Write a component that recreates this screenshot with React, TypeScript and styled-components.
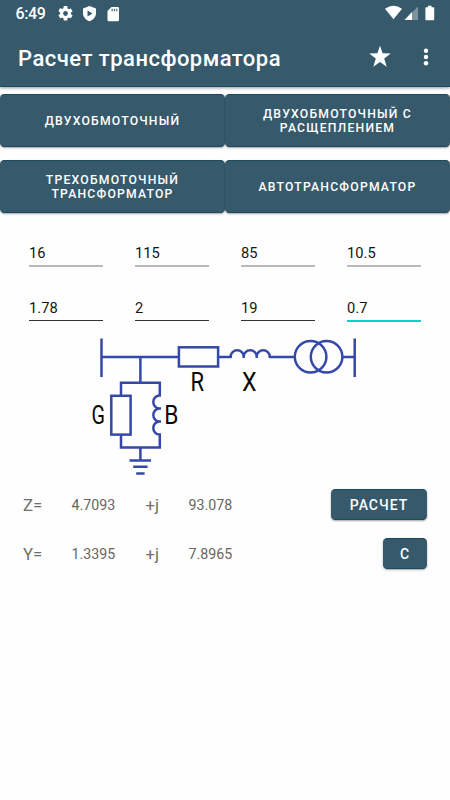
import React from "react";
import styled, { createGlobalStyle } from "styled-components";

const PRIMARY = "#365a6c";

const GlobalStyle = createGlobalStyle`
  * { box-sizing: border-box; }
  body { margin: 0; background: #fff; font-family: Roboto, sans-serif; }
`;

const Screen = styled.div`
  width: 450px;
  height: 800px;
  overflow: hidden;
  background: #fefefe;
  display: flex;
  flex-direction: column;
`;

const Header = styled.header`
  height: 87px;
  flex: none;
  background: ${PRIMARY};
  color: #fff;
  border-bottom: 1px solid #1c4a61;
  box-shadow: 0 1px 3px rgba(0, 0, 0, 0.4);
`;

const StatusBar = styled.div`
  height: 27px;
  display: flex;
  align-items: center;
  padding-left: 15.5px;
`;

const Clock = styled.span`
  font-size: 16px;
  font-weight: 500;
  line-height: 27px;
  width: 42.5px;
  letter-spacing: -0.35px;
`;

const StatusIcons = styled.div`
  display: flex;
  align-items: center;
  gap: 9px;
  height: 27px;
`;

const Signals = styled.svg`
  margin-left: auto;
  display: block;
`;

const AppBar = styled.div`
  height: 60px;
  display: flex;
  align-items: center;
  padding: 3px 18px 0 18px;
`;

const Title = styled.h1`
  margin: 0;
  flex: 1;
  font-size: 22px;
  line-height: 30px;
  font-weight: 500;
  letter-spacing: 0.48px;
`;

const ActionIcon = styled.svg<{ $gap?: number }>`
  display: block;
  flex: none;
  margin: -3px ${(p) => p.$gap ?? 0}px 0 0;
`;

const ModeGrid = styled.nav`
  flex: none;
  display: grid;
  grid-template-columns: 225px 225px;
  grid-auto-rows: 53px;
  row-gap: 13px;
  padding-top: 7px;
`;

const Button = styled.button<{ $size?: number; $width?: number }>`
  width: ${(p) => (p.$width ? `${p.$width}px` : "auto")};
  border: 1px solid ${PRIMARY};
  border-top-color: #1a4960;
  border-bottom-color: #1a4960;
  border-radius: 4.5px;
  padding: 0;
  background: ${PRIMARY};
  box-shadow: 0 1px 2px rgba(0, 0, 0, 0.36);
  color: #fff;
  font-family: inherit;
  font-weight: 500;
  font-size: ${(p) => p.$size ?? 12.2}px;
  line-height: 14px;
  letter-spacing: ${(p) => (p.$size ? 1 : 1.21)}px;
  white-space: pre-line;
`;

const Fields = styled.div`
  flex: none;
  display: grid;
  grid-template-columns: repeat(4, 74px);
  grid-auto-rows: 27px;
  column-gap: 32px;
  row-gap: 28px;
  padding: 28px 29px 0;
`;

type Tone = "idle" | "ready" | "focus";
const underline: Record<Tone, string> = {
  idle: "2px solid #b9b9b9",
  ready: "1px solid #333",
  focus: "2px solid #07d5bf",
};

const Field = styled.input<{ $tone: Tone }>`
  width: 74px;
  height: ${(p) => (p.$tone === "ready" ? 25 : 26)}px;
  border: 0;
  border-bottom: ${(p) => underline[p.$tone]};
  padding: 0;
  outline: 0;
  background: transparent;
  color: #151515;
  font: 400 14.7px Roboto, sans-serif;
`;

const Diagram = styled.svg`
  flex: none;
  display: block;
  margin: 7px 0 0 85px;
`;

const Results = styled.section`
  flex: none;
  display: flex;
  flex-direction: column;
  gap: 18px;
  padding: 9px 23px 0;
`;

const ResultRow = styled.div`
  display: grid;
  grid-template-columns: 48.5px 74px 43px 1fr auto;
  align-items: center;
  height: 31px;
  color: #666;
  font-size: 14.2px;

  ${Button} {
    height: 31px;
  }
`;

const Symbol = styled.span`
  font-size: 16.8px;
  line-height: 20px;
  color: #707070;
`;

const fields: { value: string; tone: Tone }[] = [
  { value: "16", tone: "idle" },
  { value: "115", tone: "idle" },
  { value: "85", tone: "idle" },
  { value: "10.5", tone: "idle" },
  { value: "1.78", tone: "ready" },
  { value: "2", tone: "ready" },
  { value: "19", tone: "ready" },
  { value: "0.7", tone: "focus" },
];

const modes = [
  "ДВУХОБМОТОЧНЫЙ",
  "ДВУХОБМОТОЧНЫЙ С\nРАСЩЕПЛЕНИЕМ",
  "ТРЕХОБМОТОЧНЫЙ\nТРАНСФОРМАТОР",
  "АВТОТРАНСФОРМАТОР",
];

function Circuit() {
  return (
    <Diagram width="280" height="150" viewBox="85 330 280 150">
      <g fill="none" stroke="#3648a7" strokeWidth="2.5">
        <path d="M101.5 338.5V377M101.5 356.9H178.8M218.2 356.9H230.8M269.5 356.9H294.5M342.5 356.9H354.7M354.7 338.5V377" />
        <rect x="178.9" y="347.3" width="39.2" height="19.2" />
        <path d="M230.7 358V356.5a6.5 6.2 0 0 1 13 0V358M243.7 356.5a6.5 6.2 0 0 1 13 0V358M256.7 356.5a6.5 6.2 0 0 1 13 0V358" />
        <circle cx="310.6" cy="356.8" r="15.8" />
        <circle cx="326.6" cy="356.8" r="15.8" />
        <path d="M140.4 357V382.7M121 395.8V382.7H159.8V395.8M121 434.6V447.4H159.8V434.6M140.4 447.4V460.4" />
        <rect x="111.3" y="395.8" width="19.3" height="38.8" />
        <path d="M161 395.5H159.5a6.2 6.5 0 0 0 0 13H161M159.5 408.5a6.2 6.5 0 0 0 0 13H161M159.5 421.5a6.2 6.5 0 0 0 0 13H161" />
        <path d="M129.5 460.4H151M133.2 466.8H147.6M136.2 473.4H144.6" />
      </g>
      <g fill="#080808" fontFamily="Roboto, sans-serif" fontSize="25" fontWeight="400">
        <text transform="translate(91.4 424) scale(.79 1)">G</text>
        <text transform="translate(164.3 424) scale(.91 1)">B</text>
        <text transform="translate(190.4 391.3) scale(.88 1)">R</text>
        <text transform="translate(241.9 391.3) scale(.93 1)">X</text>
      </g>
    </Diagram>
  );
}

export default function App() {
  return (
    <>
      <GlobalStyle />
      <Screen>
        <Header>
          <StatusBar>
            <Clock>6:49</Clock>
            <StatusIcons>
              <svg width="15" height="15" viewBox="2 2 20 20" fill="#fff">
                <path d="M19.14 12.94c.04-.3.06-.61.06-.94s-.02-.64-.07-.94l2.03-1.58a.49.49 0 0 0 .12-.61l-1.92-3.32a.49.49 0 0 0-.59-.22l-2.39.96a7 7 0 0 0-1.62-.94l-.36-2.54A.48.48 0 0 0 13.92 2h-3.84a.48.48 0 0 0-.48.41l-.36 2.54c-.59.24-1.13.57-1.62.94l-2.39-.96a.49.49 0 0 0-.59.22L2.72 8.47a.49.49 0 0 0 .12.61l2.03 1.58a6 6 0 0 0 0 1.88l-2.03 1.58a.49.49 0 0 0-.12.61l1.92 3.32c.12.22.37.29.59.22l2.39-.96c.5.38 1.03.7 1.62.94l.36 2.54c.05.24.25.41.48.41h3.84c.24 0 .44-.17.48-.41l.36-2.54c.59-.24 1.13-.56 1.62-.94l2.39.96c.22.08.47 0 .59-.22l1.92-3.32a.49.49 0 0 0-.12-.61zM12 15.2a3.2 3.2 0 1 1 0-6.4 3.2 3.2 0 0 1 0 6.4z" />
              </svg>
              <svg width="16" height="17" viewBox="0 0 16 17" fill="#fff" fillRule="evenodd">
                <path d="M7.500 1 14 3.500v4.700c0 3.400-2.700 6.600-6.500 8-3.800-1.400-6.500-4.600-6.500-8V3.500zM5.500 5.500v6l5-3z" />
              </svg>
              <svg width="13" height="16" viewBox="0 0 13 16" fill="#fff">
                <path d="M4.500 1.100h6.200a1.300 1.300 0 0 1 1.300 1.300v11.600a1.300 1.300 0 0 1-1.300 1.300H1.800A1.300 1.300 0 0 1 .5 14V5z" />
                <path fill="#52717f" d="M4.500 2.800h1.300v2.400H4.500zM6.800 2.800h1.300v2.400H6.800zM9.100 2.800h1.300v2.400H9.100z" />
              </svg>
            </StatusIcons>
            <Signals width="66" height="27" viewBox="384 0 66 27" fill="#fff">
              <path d="M385 8.700Q393.500 2.600 402 8.700L393.500 19.300z" />
              <path opacity=".35" d="M418 6.500V20h-6v-7.500z" />
              <path d="M404.500 20 412 12v8z" />
              <path d="M428 5.800h3.500v1.400h2q.7 0 .7.700v11.400q0 .9-.9.900h-7q-.9 0-.9-.9V7.900q0-.7.700-.7H428z" />
            </Signals>
          </StatusBar>
          <AppBar>
            <Title>Расчет трансформатора</Title>
            <ActionIcon $gap={32.500} width="22" height="22" viewBox="0 .6 22 22" fill="#fff">
              <path d="m11 .3 2.600 7.600 8.200.200-6.600 5 2.500 8.200-6.700-4.800-6.700 4.800 2.500-8.200-6.600-5 8.200-.2z" />
            </ActionIcon>
            <ActionIcon $gap={3} width="6" height="20" viewBox="0 0 6 20" fill="#fff">
              <circle cx="3" cy="3.700" r="2.200" />
              <circle cx="3" cy="10" r="2.200" />
              <circle cx="3" cy="16.300" r="2.200" />
            </ActionIcon>
          </AppBar>
        </Header>
        <ModeGrid>
          {modes.map((mode) => (
            <Button key={mode}>{mode}</Button>
          ))}
        </ModeGrid>
        <Fields>
          {fields.map((f) => (
            <Field key={f.value} defaultValue={f.value} $tone={f.tone} />
          ))}
        </Fields>
        <Circuit />
        <Results>
          <ResultRow>
            <Symbol>Z=</Symbol>
            <span>4.7093</span>
            <Symbol>+j</Symbol>
            <span>93.078</span>
            <Button $size={14} $width={96}>РАСЧЕТ</Button>
          </ResultRow>
          <ResultRow>
            <Symbol>Y=</Symbol>
            <span>1.3395</span>
            <Symbol>+j</Symbol>
            <span>7.8965</span>
            <Button $size={14} $width={44}>C</Button>
          </ResultRow>
        </Results>
      </Screen>
    </>
  );
}
